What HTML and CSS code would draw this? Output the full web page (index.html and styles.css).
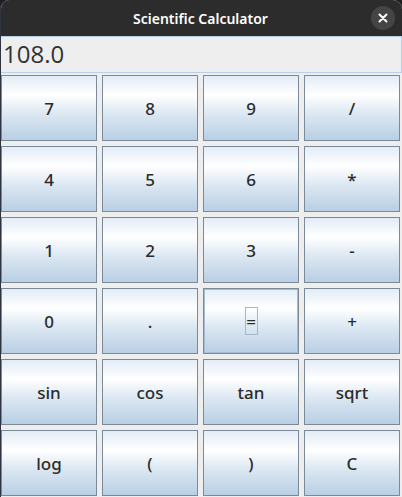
FILE: index.html
```html
<!DOCTYPE html>
<html>
<head>
<meta charset="utf-8">
<link rel="stylesheet" href="styles.css">
</head>
<body>
<div class="window">
  <div class="titlebar">
    <span class="title">Scientific Calculator</span>
    <span class="close">
      <svg width="10" height="10" viewBox="0 0 10 10"><path d="M1.5 1.5 L8.5 8.5 M8.5 1.5 L1.5 8.5" stroke="#ffffff" stroke-width="2" stroke-linecap="round"/></svg>
    </span>
  </div>
  <div class="content">
    <div class="display">108.0</div>
    <div class="keys">
      <button class="key">7</button>
      <button class="key">8</button>
      <button class="key">9</button>
      <button class="key">/</button>
      <button class="key">4</button>
      <button class="key">5</button>
      <button class="key">6</button>
      <button class="key">*</button>
      <button class="key">1</button>
      <button class="key">2</button>
      <button class="key">3</button>
      <button class="key">-</button>
      <button class="key">0</button>
      <button class="key">.</button>
      <button class="key focused"><span class="focusring">=</span></button>
      <button class="key">+</button>
      <button class="key">sin</button>
      <button class="key">cos</button>
      <button class="key">tan</button>
      <button class="key">sqrt</button>
      <button class="key">log</button>
      <button class="key">(</button>
      <button class="key">)</button>
      <button class="key">C</button>
    </div>
  </div>
</div>
</body>
</html>
```

FILE: styles.css
```css
html, body {
  margin: 0;
  padding: 0;
  background: #1f1f1f;
  width: 402px;
  height: 497px;
  overflow: hidden;
}
.window {
  width: 402px;
  height: 497px;
  display: flex;
  flex-direction: column;
  border-radius: 9px 9px 0 0;
  overflow: hidden;
  background: #eeeeee;
  box-sizing: border-box;
  border-left: 1px solid #2e3440;
}
.titlebar {
  height: 36px;
  flex: none;
  background: #2c2c2c;
  position: relative;
  display: flex;
  align-items: center;
  justify-content: center;
}
.title {
  color: #ffffff;
  font-family: "Noto Sans", "Open Sans", sans-serif;
  font-weight: 600;
  font-size: 14px;
  margin-left: -2px;
}
.close {
  position: absolute;
  right: 7px;
  top: 6px;
  width: 24px;
  height: 24px;
  border-radius: 50%;
  background: #454545;
  display: flex;
  align-items: center;
  justify-content: center;
}
.content {
  flex: 1;
  display: flex;
  flex-direction: column;
  background: #eeeeee;
}
.display {
  height: 37px;
  box-sizing: border-box;
  border: 1px solid #b8cfe5;
  border-left: none;
  background: #eeeeee;
  font-family: "Open Sans", "Noto Sans", sans-serif;
  font-size: 24px;
  color: #333333;
  line-height: 34px;
  padding-left: 2px;
}
.keys {
  margin-top: 2px;
  display: grid;
  grid-template-columns: repeat(4, 96px);
  grid-template-rows: repeat(6, 66px);
  column-gap: 5px;
  row-gap: 5px;
}
.key {
  margin: 0;
  padding: 0;
  box-sizing: border-box;
  border: 1px solid #7a8a99;
  background: linear-gradient(to bottom, #e3ecf6 0%, #ffffff 30%, #dbe7f2 60%, #b9cfe4 100%);
  font-family: "Noto Sans", "Open Sans", sans-serif;
  font-weight: 500;
  font-size: 17px;
  color: #2b2b2b;
  display: flex;
  align-items: center;
  justify-content: center;
}
.key.focused {
  box-shadow: inset 0 0 0 1px #a3bdd6;
}
.focusring {
  display: inline-flex;
  align-items: center;
  justify-content: center;
  width: 13px;
  height: 28px;
  box-sizing: border-box;
  border: 1px solid #a3b8cc;
  font-size: 17px;
}
```
